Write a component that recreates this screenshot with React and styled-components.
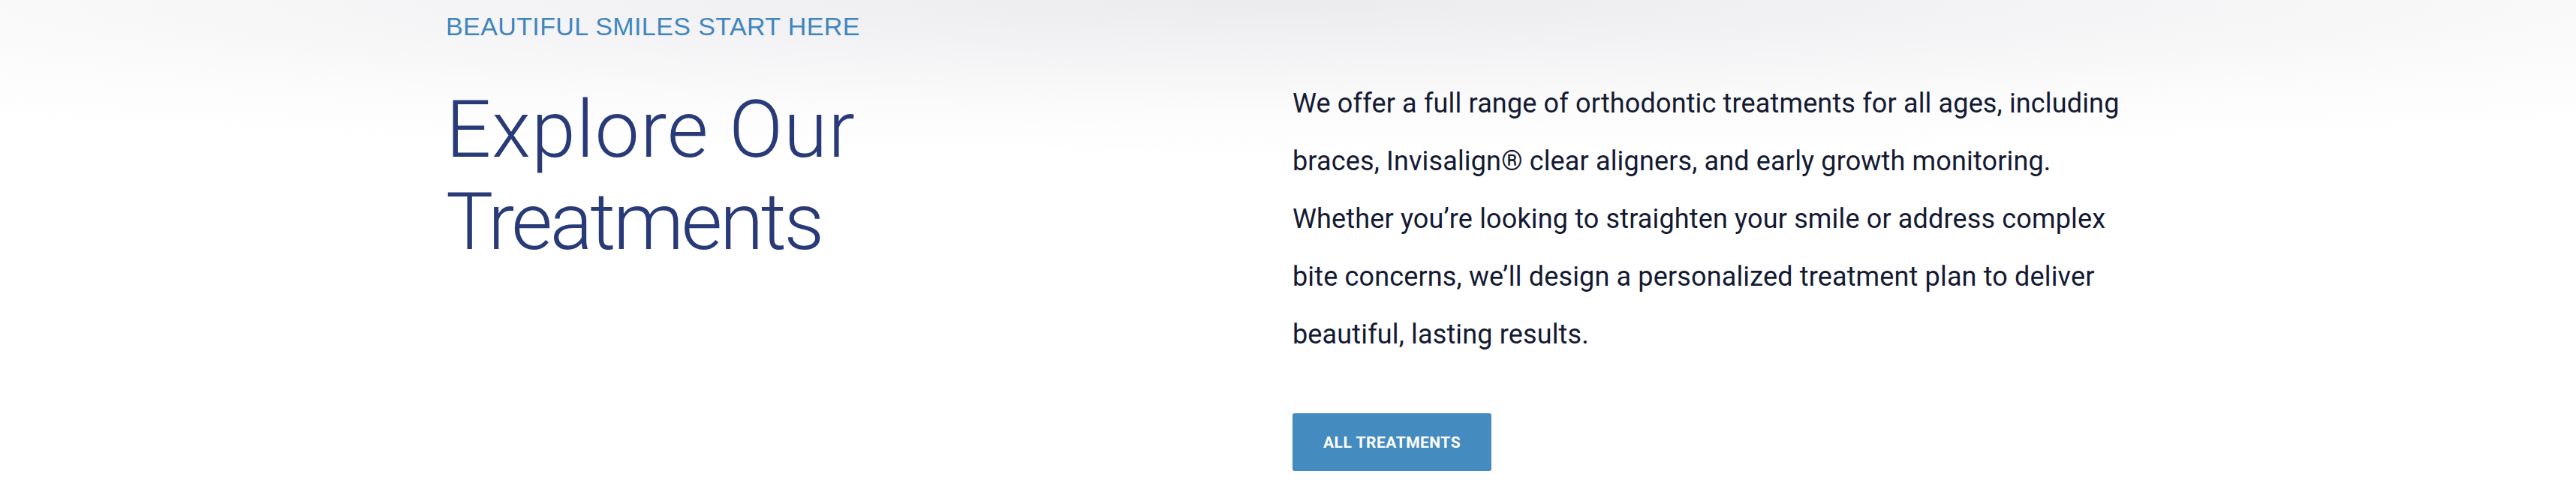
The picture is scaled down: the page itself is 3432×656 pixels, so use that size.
import styled, { createGlobalStyle } from "styled-components";

const GlobalStyle = createGlobalStyle`
  html, body {
    margin: 0;
    padding: 0;
    background: #ffffff;
  }
  * {
    box-sizing: border-box;
  }
`;

export default function App() {
  return (
    <>
      <GlobalStyle />
      <Section>
        <Container>
          <Eyebrow>Beautiful Smiles Start Here</Eyebrow>
          <Columns>
            <Heading>
              <HeadingLine $tracking="1px">Explore Our</HeadingLine>
              <HeadingLine $tracking="-3.4px">Treatments</HeadingLine>
            </Heading>
            <Body>
              <Text>
                We offer a full range of orthodontic treatments for all ages,
                including braces, Invisalign® clear aligners, and early growth
                monitoring. Whether you’re looking to straighten your smile or
                address complex bite concerns, we’ll design a personalized
                treatment plan to deliver beautiful, lasting results.
              </Text>
              <Button href="#">All Treatments</Button>
            </Body>
          </Columns>
        </Container>
      </Section>
    </>
  );
}

const Section = styled.section`
  min-height: 656px;
  background:
    radial-gradient(
      ellipse 2800px 210px at 50% 0,
      #ebebed 0%,
      #f3f3f5 35%,
      #fbfbfb 70%,
      rgba(255, 255, 255, 0) 100%
    ),
    #ffffff;
`;

const Container = styled.div`
  width: 2244px;
  margin: 0 auto;
  padding-top: 18px;
`;

const Eyebrow = styled.p`
  margin: 0;
  font-family: "Liberation Sans", Arial, sans-serif;
  font-size: 34px;
  line-height: 34px;
  letter-spacing: 0.4px;
  text-transform: uppercase;
  color: #3f86bd;
`;

const Columns = styled.div`
  display: grid;
  grid-template-columns: 1128px 1fr;
  margin-top: 48px;
`;

const Heading = styled.h2`
  margin: 12px 0 0;
  font-family: Roboto, "Liberation Sans", sans-serif;
  font-weight: 300;
  font-size: 106px;
  line-height: 123px;
  color: #283a78;
`;

const HeadingLine = styled.span`
  display: block;
  letter-spacing: ${(p) => p.$tracking || "0"};
`;

const Body = styled.div`
  display: flex;
  flex-direction: column;
  align-items: flex-start;
`;

const Text = styled.p`
  margin: 0;
  font-family: Roboto, "Liberation Sans", sans-serif;
  font-size: 36px;
  line-height: 77px;
  letter-spacing: 0.15px;
  color: #141a33;
`;

const Button = styled.a`
  display: inline-flex;
  align-items: center;
  justify-content: center;
  height: 77px;
  margin-top: 66px;
  padding: 0 41px;
  border-radius: 3px;
  background: #448bbf;
  color: #ffffff;
  font-family: Roboto, "Liberation Sans", sans-serif;
  font-weight: 700;
  font-size: 21px;
  letter-spacing: 0.5px;
  text-transform: uppercase;
  text-decoration: none;
`;
